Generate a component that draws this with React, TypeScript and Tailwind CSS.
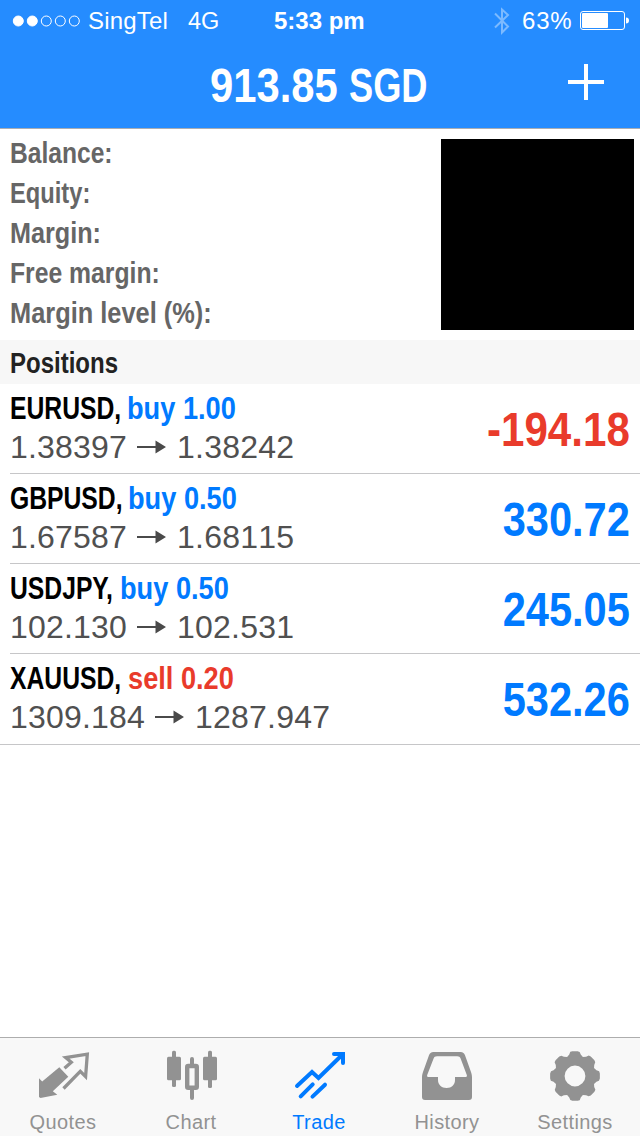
import type { ReactNode } from 'react'
import clsx from 'clsx'

const summary = [
  { label: 'Balance:', fit: 'scale-x-[0.82]' },
  { label: 'Equity:', fit: 'scale-x-[0.79]' },
  { label: 'Margin:', fit: 'scale-x-[0.84]' },
  { label: 'Free margin:', fit: 'scale-x-[0.824]' },
  { label: 'Margin level (%):', fit: 'scale-x-[0.846]' },
]

const positions = [
  { symbol: 'EURUSD', symbolWidth: 'w-[117px]', side: 'buy', volume: '1.00', open: '1.38397', current: '1.38242', profit: '-194.18' },
  { symbol: 'GBPUSD', symbolWidth: 'w-[118px]', side: 'buy', volume: '0.50', open: '1.67587', current: '1.68115', profit: '330.72' },
  { symbol: 'USDJPY', symbolWidth: 'w-[110px]', side: 'buy', volume: '0.50', open: '102.130', current: '102.531', profit: '245.05' },
  { symbol: 'XAUUSD', symbolWidth: 'w-[118px]', side: 'sell', volume: '0.20', open: '1309.184', current: '1287.947', profit: '532.26' },
]

function StatusBar() {
  return (
    <div className="flex h-10 items-center pt-px text-[24px] leading-10 whitespace-nowrap">
      <svg className="ml-3 h-3 w-[70px] shrink-0" viewBox="0 0 70 12" fill="none" stroke="white">
        <circle cx="6.3" cy="6" r="5" fill="white" />
        <circle cx="20.3" cy="6" r="5" fill="white" />
        <circle cx="34.3" cy="6" r="5" />
        <circle cx="48.3" cy="6" r="5" />
        <circle cx="62.3" cy="6" r="5" />
      </svg>
      <span className="ml-1.5 w-[100px] tracking-[0.2px]">SingTel</span>
      <span className="w-[86px] text-[23.5px]">4G</span>
      <span className="w-[220px] font-bold">5:33 pm</span>
      <svg className="h-7 w-4 shrink-0" viewBox="0 0 16 28" fill="none" stroke="#7cbaff" strokeWidth="2">
        <path d="M1 6.5 14 19.5 8 25.5V2.5L14 8 1 20.5" />
      </svg>
      <span className="ml-3 w-[58px] tracking-[0.8px]">63%</span>
      <svg className="h-[19px] w-[50px] shrink-0" viewBox="0 0 50 19" fill="none">
        <rect x="0.5" y="0.5" width="44" height="18" rx="2.5" stroke="white" />
        <rect x="2" y="2" width="26" height="15" rx="1" fill="white" />
        <path d="M46 6.5c2 0 3 1 3 3s-1 3-3 3z" fill="white" />
      </svg>
    </div>
  )
}

function Header() {
  return (
    <header className="h-[129px] border-b border-[#a9adb3] bg-[#258cff] text-white">
      <StatusBar />
      <div className="flex h-[88px] items-center pt-[3px] pl-[210px] text-[48px] leading-[48px] font-bold whitespace-nowrap">
        <span className="w-[139px] origin-left scale-x-[0.87]">913.85</span>
        <span className="w-[219px] origin-left scale-x-[0.755]">SGD</span>
        <svg className="-mt-[7px] h-9 w-9 shrink-0" viewBox="0 0 36 36" fill="white">
          <path d="M16 0h4v16h16v4H20v16h-4V20H0v-4h16z" />
        </svg>
      </div>
    </header>
  )
}

function Arrow() {
  return (
    <svg className="h-4 w-[29px] shrink-0" viewBox="0 0 29 16" fill="#4a4a4a">
      <path d="M0 7h18.5V1.5L29 8 18.5 14.5V9H0z" />
    </svg>
  )
}

function Position({ item }: { item: (typeof positions)[number] }) {
  const loss = item.profit.startsWith('-')
  return (
    <li className="ml-2.5 flex h-[90px] border-b border-[#c6c6c8] last:ml-0 last:h-[91px] last:pl-2.5">
      <div className="flex-1 pt-1">
        <div className="flex text-[32px] leading-10 font-bold whitespace-nowrap">
          <span className={clsx('origin-left scale-x-[0.772]', item.symbolWidth)}>{item.symbol},</span>
          <span
            className={clsx(
              'w-[130px] origin-left scale-x-[0.85]',
              item.side === 'buy' ? 'text-[#007aff]' : 'text-[#e93b2b]',
            )}
          >
            {item.side} {item.volume}
          </span>
        </div>
        <div className="-mt-px flex items-center text-[32px] leading-10 tracking-[0.2px] text-[#505050] [font-kerning:none]">
          <span className="mr-[10px]">{item.open}</span>
          <Arrow />
          <span className="ml-[11px]">{item.current}</span>
        </div>
      </div>
      <span
        className={clsx(
          'mr-2.5 origin-right pt-px text-[48px] leading-[90px] font-bold [font-kerning:none]',
          loss ? 'scale-x-[0.877] text-[#e93b2b]' : 'scale-x-[0.866] text-[#007aff]',
        )}
      >
        {item.profit}
      </span>
    </li>
  )
}

// Outline of an eight-toothed gear centred on (31, 32)
const profile = [[-11, 24.6], [-6, 25], [6, 25], [11, 24.4], [15, 22.2], [22.5, 20.6], [30, 22.2]]
const gear = Array.from({ length: 8 }, (_, tooth) =>
  profile.map(([angle, r]) => {
    const a = ((tooth * 45 + angle) * Math.PI) / 180
    return `${(31 + r * Math.sin(a)).toFixed(2)} ${(32 - r * Math.cos(a)).toFixed(2)}`
  }),
).flat()

function TabIcon({ children }: { children: ReactNode }) {
  return (
    <svg className="h-[58px] w-16" viewBox="0 0 64 58" fill="currentColor">
      {children}
    </svg>
  )
}

const tabs = [
  {
    label: 'Quotes',
    icon: (
      <>
        <path d="M7 34.3 10.2 37.5 27.3 23.3 36.3 32.7 20.8 47.3 25.3 50.8 8.5 54 7 53z" />
        <path d="M32.5 24.3 39.3 18.3 33.7 13.6 55.3 10.2 53.6 32.6 48.3 27.3 31.5 44.5" fill="none" stroke="currentColor" strokeWidth="3.3" />
      </>
    ),
  },
  {
    label: 'Chart',
    icon: (
      <>
        <rect x="7" y="12.7" width="14" height="23.5" rx="1.5" />
        <rect x="12" y="6.7" width="4" height="36.3" rx="1.5" />
        <rect x="43" y="12.7" width="14" height="23.5" rx="1.5" />
        <rect x="48" y="6.7" width="4" height="37.3" rx="1.5" />
        <rect x="27.2" y="22" width="9.6" height="21.8" rx="1" fill="none" stroke="currentColor" strokeWidth="4.4" />
        <path d="M30 21v-6a2 2 0 0 1 4 0v6zM30 45v9a2 2 0 0 0 4 0v-9z" />
      </>
    ),
  },
  {
    label: 'Trade',
    icon: (
      <g fill="none" stroke="currentColor" strokeWidth="4" strokeLinecap="round">
        <path d="M9 42 24 28l6.5 6L54 11M46 10h9v9M12.7 52.3l12-12M24.5 52.6 37 40.7" />
        <path d="M50 11h4v4z" strokeWidth="1.5" />
      </g>
    ),
  },
  {
    label: 'History',
    icon: (
      <path
        fillRule="evenodd"
        d="M17.5 8h27c2.5 0 3.8 1.3 4.6 3.5L55 28c.7 2 1 3.5 1 5.5V53c0 2-1 3-3 3H9c-2 0-3-1-3-3V33.500c0-2 .3-3.500 1-5.500l5.900-16.500C13.700 9.300 15 8 17.500 8zM21 12.300c-2 0-2.800.7-3.400 2.200L11.200 31c-.4 1.200 0 1.900 1 1.900h9.800V36c0 4.500 3.500 8 8.600 8s8.400-3.500 8.400-8v-3.100h10.700c1.100 0 1.500-.7 1.100-1.900l-6.200-16.500c-.6-1.500-1.400-2.200-3.400-2.200z"
      />
    ),
  },
  {
    label: 'Settings',
    icon: (
      <path
        fillRule="evenodd"
        d={`M${gear.join('L')}ZM31 21.6a10.4 10.4 0 1 0 0 20.8a10.4 10.4 0 1 0 0-20.8Z`}
      />
    ),
  },
]

function TabBar() {
  return (
    <nav className="grid h-[99px] grid-cols-5 border-t border-[#adadad] bg-[#f8f8f8]">
      {tabs.map((tab) => (
        <div
          key={tab.label}
          className={clsx(
            'flex flex-col items-center pt-1.5',
            tab.label === 'Trade' ? 'text-[#007aff]' : 'text-[#929292]',
          )}
        >
          <TabIcon>{tab.icon}</TabIcon>
          <span className="mt-[7px] mr-0.5 text-[20px] leading-[26px] tracking-[0.4px]">{tab.label}</span>
        </div>
      ))}
    </nav>
  )
}

export default function App() {
  return (
    <div className="flex h-[1136px] w-[640px] flex-col overflow-hidden bg-white font-['Liberation_Sans',Arial,sans-serif]">
      <Header />
      <section className="flex h-[211px] justify-between pr-1.5 pl-2.5">
        <ul className="pt-1 text-[30px] leading-10 font-bold text-[#666]">
          {summary.map((row) => (
            <li key={row.label} className={clsx('origin-left whitespace-nowrap', row.fit)}>
              {row.label}
            </li>
          ))}
        </ul>
        <div className="mt-2.5 h-[191px] w-[193px] bg-black" />
      </section>
      <h2 className="h-11 bg-[#f7f7f7] pl-2.5 text-[30px] leading-[45px] font-bold text-[#222]">
        <span className="inline-block origin-left scale-x-[0.8]">Positions</span>
      </h2>
      <ul className="flex-1">
        {positions.map((item) => (
          <Position key={item.symbol} item={item} />
        ))}
      </ul>
      <TabBar />
    </div>
  )
}
